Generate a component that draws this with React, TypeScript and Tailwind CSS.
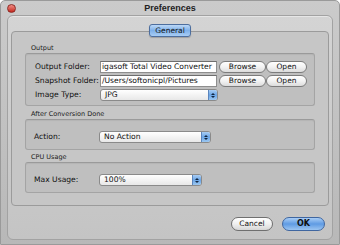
import type { ReactNode } from 'react'

const ui = "font-['DejaVu_Sans',sans-serif] text-[7.6px] text-[#111]"

function Group({ title, children, className }: { title: string; children: ReactNode; className: string }) {
  return (
    <div>
      <div className="h-[10px] flex items-center pl-[6px] text-[6.5px] leading-none text-[#1a1a1a]">{title}</div>
      <div className={`rounded-[3px] border border-[#a4a4a4] border-t-[#9a9a9a] bg-[#bfbfbf] shadow-[inset_0_1px_1px_rgba(0,0,0,0.06)] ${className}`}>
        {children}
      </div>
    </div>
  )
}

function Field({ value, width }: { value: string; width: string }) {
  return (
    <div className={`${width} h-[12px] bg-white border border-[#8e8e8e] border-t-[#6e6e6e] flex items-center px-[1px] overflow-hidden whitespace-nowrap leading-none`}>
      {value}
    </div>
  )
}

function PillButton({ label, width }: { label: string; width: string }) {
  return (
    <div className={`${width} h-[12px] rounded-full border border-[#7c7c7c] bg-gradient-to-b from-white via-[#f2f2f2] to-[#dcdcdc] flex items-center justify-center text-[7.5px] leading-none`}>
      {label}
    </div>
  )
}

function Select({ value, width }: { value: string; width: string }) {
  return (
    <div className={`${width} h-[12px] rounded-[3px] border border-[#8a8a8a] bg-gradient-to-b from-white to-[#e8e8e8] flex items-center leading-none overflow-hidden`}>
      <span className="flex-1 pl-[4px]">{value}</span>
      <span className="w-[9px] h-full bg-gradient-to-b from-[#a9cdf3] via-[#6aa5e6] to-[#9cc7f0] border-l border-[#5b85bd] flex flex-col items-center justify-center gap-[1px]">
        <svg width="4" height="2" viewBox="0 0 4 2"><path d="M0 2L2 0L4 2Z" fill="#10243f" /></svg>
        <svg width="4" height="2" viewBox="0 0 4 2"><path d="M0 0L2 2L4 0Z" fill="#10243f" /></svg>
      </span>
    </div>
  )
}

function Row({ label, width, children }: { label: string; width: string; children: ReactNode }) {
  return (
    <div className="flex items-center h-[12px]">
      <span className={`${width} shrink-0 leading-none whitespace-nowrap`}>{label}</span>
      {children}
    </div>
  )
}

export default function App() {
  return (
    <div className={`${ui} w-[340px] h-[245px] bg-gradient-to-b from-[#cbcbcb] to-[#b8b8b8] border border-[#9a9a9a] rounded-t-[5px] flex flex-col`}>
      {/* title bar */}
      <div className="h-[14px] flex items-center px-[6px]">
        <span className="w-[9px] h-[9px] rounded-full bg-gradient-to-b from-[#f08b84] to-[#c4211a] border border-[#8e2a25]" />
        <span className="flex-1 text-center pr-[9px] font-['Liberation_Sans',sans-serif] font-bold text-[9px] leading-none text-[#222]">
          Preferences
        </span>
      </div>

      {/* content panel */}
      <div className="mx-[6px] h-[225px] rounded-[6px] border border-[#a2a2a2] bg-gradient-to-b from-[#d4d4d4] to-[#c4c4c4] shadow-[inset_0_1px_0_#e6e6e6] flex flex-col px-[3px] pt-[8px]">
        <div className="flex justify-center relative z-10">
          <div className="w-[42px] h-[13px] rounded-[3px] border border-[#4d6e9e] bg-gradient-to-b from-[#bcd8f6] via-[#7fb1ea] to-[#a8cdf4] flex items-center justify-center text-[7.5px] leading-none shadow-[0_1px_1px_rgba(0,0,0,0.2)]">
            General
          </div>
        </div>

        {/* tab box */}
        <div className="-mt-[6px] h-[175px] rounded-[4px] border border-[#9b9b9b] bg-[#c6c6c6] px-[13px] pt-[11px]">
          <Group title="Output" className="h-[53px] pt-[7px] pl-[9px] flex flex-col gap-[2px]">
            <Row label="Output Folder:" width="w-[65px]">
              <Field value="igasoft Total Video Converter" width="w-[117px]" />
              <div className="ml-[2px]"><PillButton label="Browse" width="w-[47px]" /></div>
              <PillButton label="Open" width="w-[41px]" />
            </Row>
            <Row label="Snapshot Folder:" width="w-[65px]">
              <Field value="/Users/softonicpl/Pictures" width="w-[117px]" />
              <div className="ml-[2px]"><PillButton label="Browse" width="w-[47px]" /></div>
              <PillButton label="Open" width="w-[41px]" />
            </Row>
            <Row label="Image Type:" width="w-[65px]">
              <Select value="JPG" width="w-[118px]" />
            </Row>
          </Group>

          <div className="mt-[3px]">
            <Group title="After Conversion Done" className="h-[31px] pt-[11px] pl-[8px]">
              <Row label="Action:" width="w-[65px]">
                <Select value="No Action" width="w-[112px]" />
              </Row>
            </Group>
          </div>

          <div className="mt-[2px]">
            <Group title="CPU Usage" className="h-[31px] pt-[11px] pl-[8px]">
              <Row label="Max Usage:" width="w-[65px]">
                <Select value="100%" width="w-[103px]" />
              </Row>
            </Group>
          </div>
        </div>

        {/* bottom buttons */}
        <div className="mt-[11px] flex justify-end gap-[9px] pr-[4px]">
          <div className="w-[42px] h-[14px] rounded-full border border-[#6f6f6f] bg-gradient-to-b from-white via-[#f0f0f0] to-[#d6d6d6] flex items-center justify-center text-[7.5px] leading-none">
            Cancel
          </div>
          <div className="w-[43px] h-[14px] rounded-full border border-[#3f66a0] bg-gradient-to-b from-[#a9cdf5] via-[#5f9be3] to-[#9cc5f1] flex items-center justify-center font-bold text-[8px] leading-none">
            OK
          </div>
        </div>
      </div>
    </div>
  )
}
